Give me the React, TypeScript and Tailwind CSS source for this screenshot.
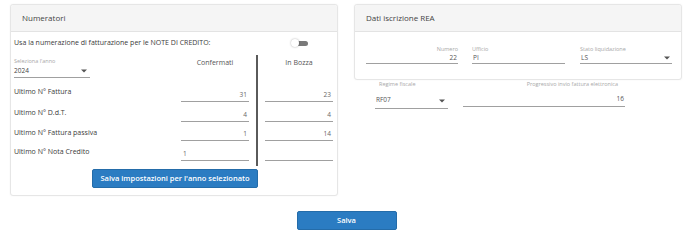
import React from "react";

const font = { fontFamily: '"Open Sans", "Liberation Sans", sans-serif' };

function Arrow() {
  return (
    <svg width="6" height="4" viewBox="0 0 6 4" className="shrink-0">
      <polygon points="0,0.5 6,0.5 3,3.5" fill="#555" />
    </svg>
  );
}

type FieldProps = {
  label: string;
  value: string;
  className?: string;
  right?: boolean;
  arrow?: boolean;
};

function Field({ label, value, className, right, arrow }: FieldProps) {
  return (
    <div className={"flex flex-col " + (className ?? "")}>
      <div className={"text-[5.5px] leading-[6px] text-[#a8a8a8] whitespace-nowrap " + (right ? "text-right" : "")}>
        {label}
      </div>
      <div
        className={
          "h-[12px] border-b border-[#a0a0a0] flex items-center text-[6.5px] text-[#555] " +
          (right ? "justify-end pr-[1px]" : "justify-between pl-[1px] pr-[2px]")
        }
      >
        <span>{value}</span>
        {arrow && <Arrow />}
      </div>
    </div>
  );
}

function NumInput({ value, left }: { value: string; left?: boolean }) {
  return (
    <div
      className={
        "h-[14px] w-full border-b border-[#a0a0a0] flex items-center text-[6.5px] text-[#666] " +
        (left ? "justify-start pl-[2px]" : "justify-end pr-[2px]")
      }
    >
      {value}
    </div>
  );
}

const rows = [
  { label: "Ultimo N° Fattura", conf: "31", bozza: "23", h: "h-[24px]", pb: "pb-[5px]" },
  { label: "Ultimo N° D.d.T.", conf: "4", bozza: "4", h: "h-[20px]", pb: "pb-[4px]" },
  { label: "Ultimo N° Fattura passiva", conf: "1", bozza: "14", h: "h-[19px]", pb: "pb-[3px]" },
  { label: "Ultimo N° Nota Credito", conf: "1", bozza: "", h: "h-[20px]", pb: "pb-[4px]", left: true },
];

function Numeratori() {
  return (
    <div className="w-[328px] border border-[#e6e6e6] rounded-[3px] bg-white shadow-[0_0_2px_rgba(0,0,0,0.05)]">
      <div className="h-[27px] bg-[#f5f5f5] border-b border-[#e3e3e3] rounded-t-[3px] flex items-center pl-[11px] text-[8px] text-[#444]">
        Numeratori
      </div>
      <div className="pl-[3px] pr-[4px] pt-[6px] pb-[7px]">
        <div className="flex items-center h-[10px]">
          <div className="w-[251px] text-[7px] text-[#3a3a3a] whitespace-nowrap">
            Usa la numerazione di fatturazione per le NOTE DI CREDITO:
          </div>
          <div className="w-[68px] flex justify-center pl-[3px]">
            <div className="relative w-[14px] h-[5px] rounded-full bg-[#7a7a7a]">
              <div className="absolute left-[-3px] top-[-2px] w-[8px] h-[8px] rounded-full bg-white shadow-[0_0_2px_rgba(0,0,0,0.35)]" />
            </div>
          </div>
        </div>
        <div className="mt-[2px] grid grid-cols-[167px_68px_16px_68px]">
          <div className="h-[28px] flex flex-col justify-end">
            <div className="text-[5.5px] leading-[7px] text-[#a8a8a8]">Seleziona l'anno</div>
            <div className="w-[76px] h-[13px] border-b border-[#a0a0a0] flex items-center justify-between pr-[3px] text-[6.5px] text-[#444]">
              <span>2024</span>
              <Arrow />
            </div>
          </div>
          <div className="h-[28px] pt-[8px] text-center text-[7px] leading-[10px] text-[#555]">Confermati</div>
          <div className="row-span-5 flex justify-center mt-[5px] -mb-[5px]">
            <div className="w-[2px] bg-[#5a5a5a]" />
          </div>
          <div className="h-[28px] pt-[8px] text-center text-[7px] leading-[10px] text-[#555]">In Bozza</div>
          {rows.map((r) => (
            <React.Fragment key={r.label}>
              <div className={r.h + " " + r.pb + " flex items-end text-[7px] leading-[10px] text-[#3a3a3a] whitespace-nowrap"}>
                {r.label}
              </div>
              <div className={r.h + " flex items-end"}>
                <NumInput value={r.conf} left={r.left} />
              </div>
              <div className={r.h + " flex items-end"}>
                <NumInput value={r.bozza} />
              </div>
            </React.Fragment>
          ))}
        </div>
        <div className="mt-[8px] flex justify-center pl-[3px]">
          <button className="w-[166px] h-[19px] rounded-[2px] bg-[#2b7cc2] border border-[#246ca9] text-white text-[7.5px] font-semibold">
            Salva impostazioni per l'anno selezionato
          </button>
        </div>
      </div>
    </div>
  );
}

function DatiRea() {
  return (
    <div className="flex flex-col">
      <div className="w-[328px] border border-[#e6e6e6] rounded-[3px] bg-white shadow-[0_0_2px_rgba(0,0,0,0.05)]">
        <div className="h-[27px] bg-[#f5f5f5] border-b border-[#e3e3e3] rounded-t-[3px] flex items-center pl-[11px] text-[8px] text-[#444]">
          Dati iscrizione REA
        </div>
        <div className="flex pl-[11px] pt-[14px] pb-[15px]">
          <Field label="Numero" value="22" right className="w-[92px]" />
          <Field label="Ufficio" value="PI" className="w-[93px] ml-[14px]" />
          <Field label="Stato liquidazione" value="LS" arrow className="w-[92px] ml-[15px]" />
        </div>
      </div>
      <div className="flex items-start pl-[21px] pt-[1px]">
        <div className="w-[73px] flex flex-col">
          <div className="text-[5.5px] leading-[6px] text-[#a8a8a8] pl-[4px]">Regime fiscale</div>
          <div className="h-[22px] border-b border-[#a0a0a0] flex items-end justify-between pb-[3px] pl-[1px] pr-[3px] text-[6.5px] text-[#555]">
            <span>RF07</span>
            <span className="pb-[2px]">
              <Arrow />
            </span>
          </div>
        </div>
        <div className="w-[162px] ml-[15px] flex flex-col">
          <div className="text-[5.5px] leading-[6px] text-[#a8a8a8] text-right pr-[7px] whitespace-nowrap">
            Progressivo invio fattura elettronica
          </div>
          <div className="h-[20px] border-b border-[#a0a0a0] flex items-end justify-end pb-[2px] pr-[1px] text-[6.5px] text-[#555]">
            16
          </div>
        </div>
      </div>
    </div>
  );
}

export default function App() {
  return (
    <div style={font} className="w-[688px] h-[246px] bg-white">
      <div className="flex items-start pt-[4px] pl-[10px] gap-[16px]">
        <Numeratori />
        <DatiRea />
      </div>
      <div className="mt-[15px] flex justify-center pl-[5px]">
        <button className="w-[100px] h-[19px] rounded-[2px] bg-[#2b7cc2] border border-[#246ca9] text-white text-[7.5px] font-semibold">
          Salva
        </button>
      </div>
    </div>
  );
}
